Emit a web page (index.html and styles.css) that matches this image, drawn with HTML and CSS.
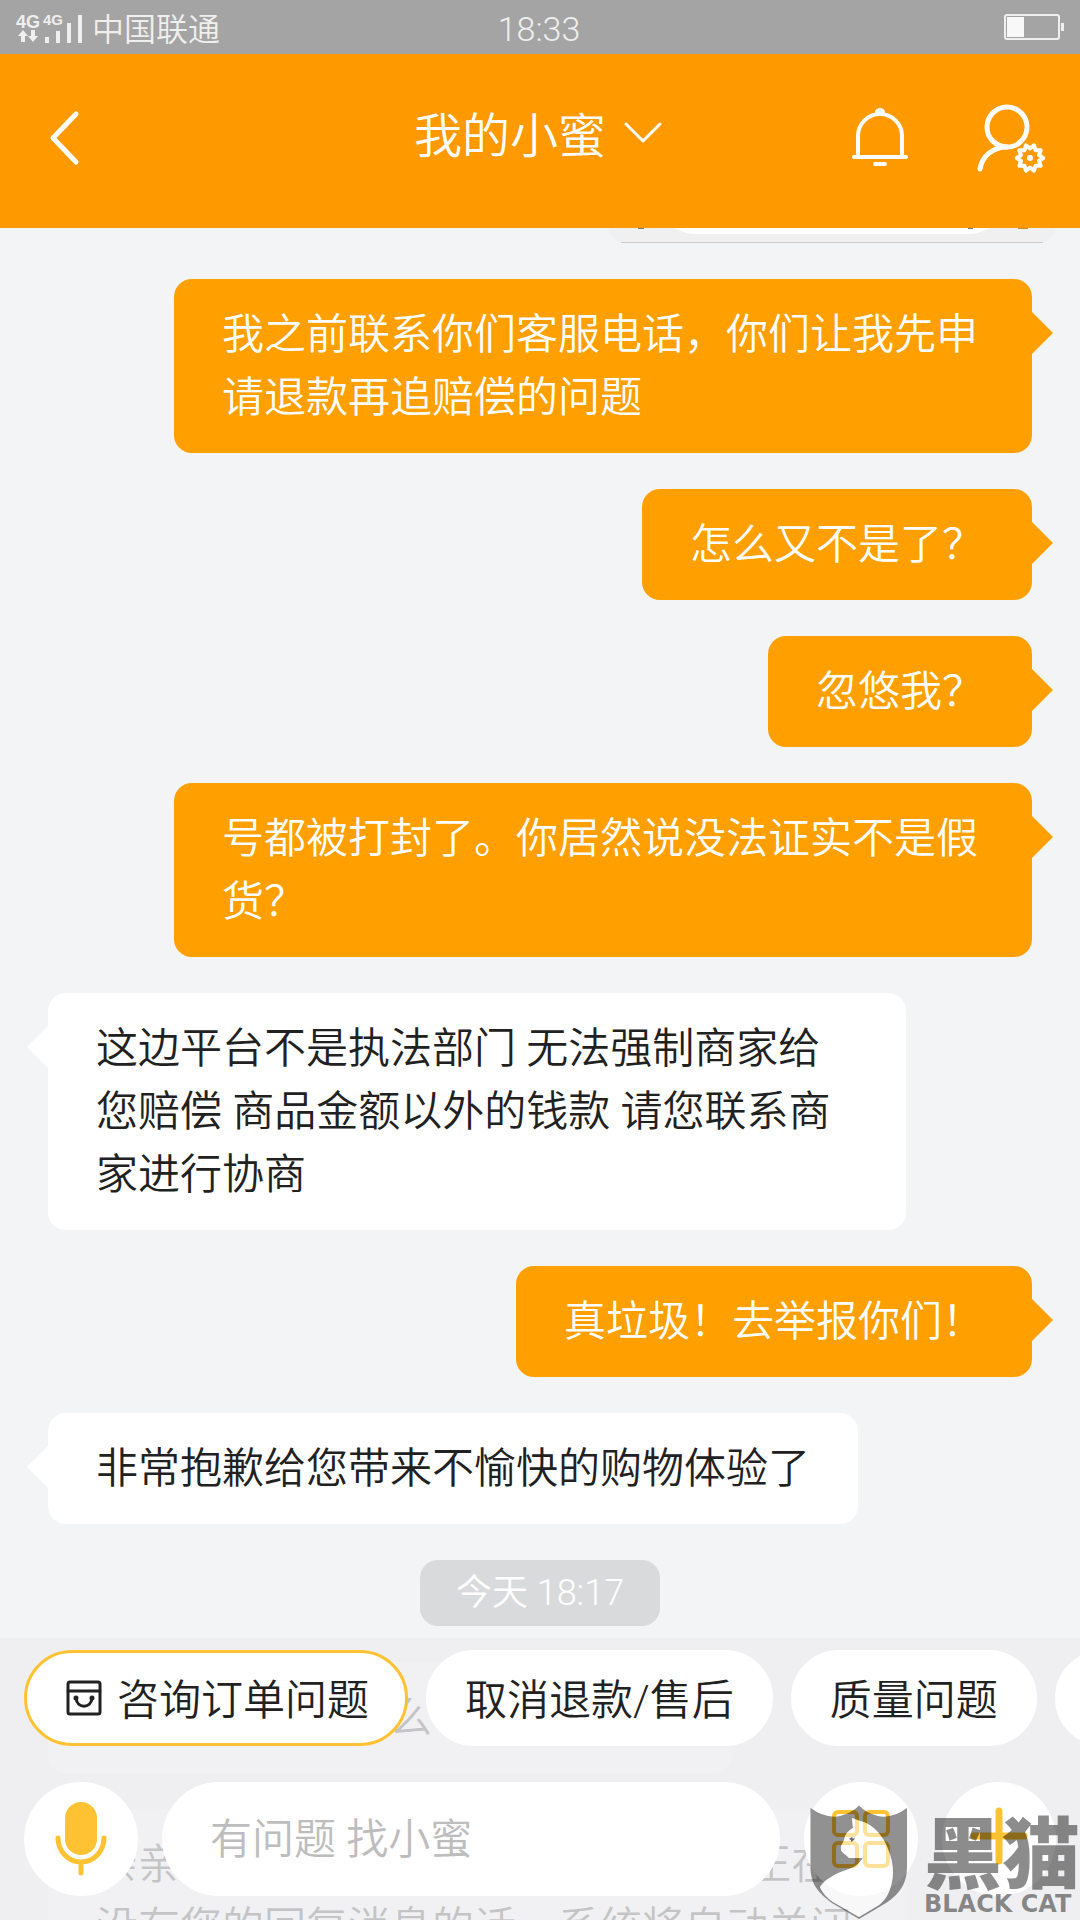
FILE: index.html
```html
<!DOCTYPE html>
<html lang="zh-CN">
<head>
  <meta charset="UTF-8" />
  <meta name="viewport" content="width=device-width, initial-scale=1.0"/>
  <title>我的小蜜</title>
  <link rel="stylesheet" href="styles.css">
</head>
<body>
  <div class="status-bar">
    <div class="network">
      <svg class="signal" width="72" height="32" viewBox="0 0 72 32">
        <text class="net-label" x="2" y="17">4G</text>
        <text class="net-label small" x="29" y="14">4G</text>
        <path d="M9 19l5 6h-3v6h-4v-6h-3z M19 31l-5-6h3v-6h4v6h3z"/>
        <path d="M31 26h4v6h-4z M42 20h4v12h-4z M53 12h4v20h-4z M64 4h4v28h-4z"/>
      </svg>
      <span>中国联通</span>
    </div>
    <span class="clock">18:33</span>
    <div class="battery">
      <svg width="60" height="28" viewBox="0 0 60 28">
        <rect x="1" y="2" width="54" height="24" rx="2" fill="none" stroke="#efefef" stroke-width="2"/>
        <rect x="3" y="4" width="17" height="20" fill="#f8f8f8"/>
        <rect x="57" y="10" width="3" height="8" fill="#efefef"/>
      </svg>
    </div>
  </div>

  <header class="header">
    <button class="icon-btn back" aria-label="返回">
      <svg width="36" height="60" viewBox="0 0 36 60">
        <path d="M28 6L5 30l23 24" stroke-width="5"/>
      </svg>
    </button>
    <button class="title">
      我的小蜜
      <svg width="42" height="30" viewBox="0 0 42 30">
        <path d="M2 7l17 17L36 7" stroke-width="3"/>
      </svg>
    </button>
    <div class="header-actions">
      <button class="icon-btn" aria-label="通知">
        <svg width="60" height="60" viewBox="0 0 60 60">
          <path d="M8 48V28a22 22 0 0 1 44 0V48" stroke-width="4"/>
          <path d="M4 49H56 M25 56H35" stroke-width="4"/>
          <path d="M26 4a4 3 0 0 1 8 0z" fill="#fff" stroke-width="2"/>
        </svg>
      </button>
      <button class="icon-btn" aria-label="账号设置">
        <svg width="72" height="72" viewBox="0 0 72 72">
          <circle cx="31" cy="25" r="20" stroke-width="5"/>
          <path d="M31 45C17 45 6 54 4 67" stroke-width="5"/>
          <g transform="translate(54 56)">
            <path d="M0-9.5L4-12.6 5.6-7.7 10.7-7.8 9-2.9 13.2 0 9 2.9 10.7 7.8 5.6 7.7 4 12.6 0 9.5-4 12.6-5.6 7.7-10.7 7.8-9 2.9-13.2 0-9-2.9-10.7-7.8-5.6-7.7-4-12.6z" stroke-width="4"/>
            <circle r="3" fill="#fff" stroke="none"/>
          </g>
        </svg>
      </button>
    </div>
  </header>

  <main class="chat">
    <svg class="photo" width="448" height="15" viewBox="0 0 448 15">
      <path d="M0 0H448C446 9 440 15 430 15H18C8 15 2 9 0 0z" fill="#f0f0f0"/>
      <path d="M66 0H382C374 4 368 6 360 6H88C80 6 74 4 66 0z" fill="#fff"/>
      <path d="M13 14.5H435" stroke="#ccc"/>
      <path d="M30 0.5h6 M360 0.5h5" stroke="#777"/>
      <path d="M410 0.5h10" stroke="#c98a2a"/>
    </svg>

    <p class="msg sent">我之前联系你们客服电话，你们让我先申请退款再追赔偿的问题</p>
    <p class="msg sent">怎么又不是了？</p>
    <p class="msg sent">忽悠我？</p>
    <p class="msg sent">号都被打封了。你居然说没法证实不是假货？</p>
    <p class="msg received">这边平台不是执法部门 无法强制商家给您赔偿 商品金额以外的钱款 请您联系商家进行协商</p>
    <p class="msg sent">真垃圾！去举报你们！</p>
    <p class="msg received">非常抱歉给您带来不愉快的购物体验了</p>
    <time class="time">今天 18:17</time>
    <p class="msg received">请问还有其他什么可以帮您的吗</p>
    <p class="msg received">亲亲，您还在线吗？小蜜3分钟内都正在没有您的回复消息的话，系统将自动关闭</p>
  </main>

  <footer class="footer">
    <nav class="chips">
      <button class="chip active">
        <svg width="42" height="42" viewBox="0 0 42 42">
          <rect x="5" y="7" width="32" height="32" rx="2"/>
          <path d="M5 16H37 M13 23c1 11 15 11 16 0"/>
          <circle cx="13" cy="23" r="1"/>
          <circle cx="29" cy="23" r="1"/>
        </svg>
        咨询订单问题
      </button>
      <button class="chip">取消退款/售后</button>
      <button class="chip">质量问题</button>
      <button class="chip">物流问题</button>
    </nav>
    <form class="compose">
      <button type="button" class="round-btn" aria-label="语音">
        <svg width="60" height="78" viewBox="0 0 60 78">
          <rect x="14" y="2" width="32" height="53" rx="16" fill="#ffc233" stroke="none"/>
          <path d="M7 38a23 24 0 0 0 46 0 M30 63V73" stroke-width="5"/>
        </svg>
      </button>
      <input class="text-box" type="text" placeholder="有问题 找小蜜" aria-label="消息">
      <button type="button" class="round-btn" aria-label="菜单">
        <svg width="60" height="60" viewBox="0 0 60 60">
          <g stroke-width="4">
            <rect x="3" y="3" width="23" height="23" rx="4"/>
            <rect x="34" y="3" width="23" height="23" rx="4"/>
            <rect x="3" y="34" width="23" height="23" rx="4"/>
            <rect x="34" y="34" width="23" height="23" rx="4"/>
          </g>
        </svg>
      </button>
      <button type="button" class="round-btn" aria-label="更多">
        <svg width="60" height="66" viewBox="0 0 60 66">
          <path d="M5 30H55 M30 5V55" stroke-width="7"/>
        </svg>
      </button>
    </form>
  </footer>

  <div class="watermark">
    <svg width="98" height="115" viewBox="0 0 98 115">
      <path fill="#000" fill-opacity=".43" fill-rule="evenodd" d="M.5 3Q16 14 30 11 42 8 49 .5 56 8 68 11 82 14 97 3V62C97 80 88 90 76 98L49 114 22 98C9 88 .5 80 .5 62z
        M42 13L50 16C60 18 68 26 73 34 79 44 83 56 83 68 82 84 77 94 69 100L49 112 23 97C17 93 12 87 10 82 14 75 26 68 39 64 46 62 50 57 53 53H39C36 49 31 48 31 44 30 40 34 38 35 31 37 27 40 25 43 23z"/>
      <path fill="#fff" fill-opacity=".5" d="M42 13L50 16C60 18 68 26 73 34 79 44 83 56 83 68 82 84 77 94 69 100L49 112 23 97C17 93 12 87 10 82 14 75 26 68 39 64 46 62 50 57 53 53H39C36 49 31 48 31 44 30 40 34 38 35 31 37 27 40 25 43 23z"/>
      <path fill="#666" d="M39 34l3-2 1 2 2-2-1 3-3 2v-2z"/>
    </svg>
    <div class="brand">
      <span class="brand-cn">黑猫</span>
      <span class="brand-en">BLACK CAT</span>
    </div>
  </div>
</body>
</html>
```
FILE: styles.css
```css
* { box-sizing: border-box; }
body {
  margin: 0;
  height: 100vh;
  display: flex;
  flex-direction: column;
  position: relative;
  overflow: hidden;
  background-color: #f3f4f6;
  color: #212121;
  font-family: Roboto, 'Noto Sans CJK SC', sans-serif;
  font-weight: 350;
  font-size: 42px;
}
button, input {
  font: inherit;
  color: inherit;
  border: none;
  padding: 0;
  margin: 0;
}
button {
  background: none;
  cursor: pointer;
}
svg {
  display: block;
  flex-shrink: 0;
}

/* status bar */
.status-bar {
  flex-shrink: 0;
  height: 54px;
  padding: 0 16px 0 14px;
  display: grid;
  grid-template-columns: 1fr auto 1fr;
  align-items: center;
  background-color: #a4a4a4;
  color: #efefef;
  font-size: 32px;
}
.network {
  display: flex;
  align-items: center;
  gap: 6px;
}
.signal { fill: #efefef; }
.net-label {
  font-family: 'Liberation Sans', sans-serif;
  font-weight: bold;
  font-size: 18px;
}
.net-label.small { font-size: 15px; }
.clock {
  padding-top: 4px;
  font-size: 34px;
}
.battery { justify-self: end; }

/* header */
.header {
  flex-shrink: 0;
  height: 174px;
  padding: 0 32px 6px;
  display: grid;
  grid-template-columns: 1fr auto 1fr;
  align-items: center;
  background-color: #ff9900;
  color: #fff;
}
.header svg {
  fill: none;
  stroke: #fff;
  stroke-linecap: round;
  stroke-linejoin: round;
}
.back {
  justify-self: start;
  margin-left: 16px;
}
.title {
  display: flex;
  align-items: center;
  gap: 18px;
  padding-bottom: 12px;
  font-size: 48px;
}
.header-actions {
  display: flex;
  align-items: center;
  justify-content: flex-end;
  gap: 66px;
}

/* messages */
.chat {
  flex: 1;
  min-height: 0;
  overflow: hidden;
  padding: 0 24px;
  display: flex;
  flex-direction: column;
  align-items: flex-start;
  gap: 36px;
}
.photo { align-self: flex-end; }
.msg {
  position: relative;
  flex-shrink: 0;
  max-width: calc(100% - 174px);
  margin: 0 24px;
  padding: 24px 48px;
  border-radius: 18px;
  line-height: 63px;
}
.msg::after {
  content: '';
  position: absolute;
  top: 33px;
  border: 21px solid transparent;
}
.sent {
  align-self: flex-end;
  background-color: #ffa000;
  color: #fff;
}
.sent::after {
  left: 100%;
  border-left-color: #ffa000;
  border-right: none;
}
.received { background-color: #fff; }
.received::after {
  right: 100%;
  border-right-color: #fff;
  border-left: none;
}
.time {
  flex-shrink: 0;
  align-self: center;
  padding: 0 36px;
  border-radius: 18px;
  background-color: #d9dadc;
  color: #fff;
  font-size: 36px;
  line-height: 66px;
}

/* bottom panel, the chat shows through it */
.footer {
  position: absolute;
  left: 0;
  right: 0;
  bottom: 0;
  padding: 12px 0 24px;
  display: flex;
  flex-direction: column;
  gap: 36px;
  background-color: rgba(237, 238, 240, 0.8);
}
.chips {
  display: flex;
  gap: 18px;
  padding-left: 24px;
  overflow: hidden;
}
.chip {
  flex-shrink: 0;
  height: 96px;
  padding: 0 36px 4px;
  display: flex;
  align-items: center;
  gap: 12px;
  border: 3px solid #fff;
  border-radius: 48px;
  background-color: #fff;
  white-space: nowrap;
}
.chip.active { border-color: #ffc233; }
.chip svg {
  fill: none;
  stroke: #212121;
  stroke-width: 3;
  stroke-linecap: round;
}
.compose {
  display: flex;
  gap: 24px;
  padding: 0 24px;
}
.round-btn {
  flex-shrink: 0;
  width: 114px;
  height: 114px;
  display: flex;
  align-items: center;
  justify-content: center;
  border-radius: 50%;
  background-color: #fff;
}
.round-btn svg {
  fill: none;
  stroke: #ffc233;
  stroke-linecap: round;
}
.text-box {
  flex: 1;
  min-width: 0;
  height: 114px;
  padding: 0 48px;
  border-radius: 57px;
  background-color: #fff;
  outline: none;
}
.text-box::placeholder { color: #bdbdbd; }

/* watermark */
.watermark {
  position: absolute;
  right: 0;
  bottom: 0;
  display: flex;
  gap: 16px;
  color: rgba(0, 0, 0, 0.45);
  pointer-events: none;
}
.brand {
  display: flex;
  flex-direction: column;
  padding-top: 4px;
}
.brand-cn {
  font-family: 'Noto Sans CJK SC', sans-serif;
  font-weight: 900;
  font-size: 78px;
  line-height: 80px;
}
.brand-en {
  font-family: 'DejaVu Sans', sans-serif;
  font-weight: bold;
  font-size: 24px;
  line-height: 31px;
}
```
